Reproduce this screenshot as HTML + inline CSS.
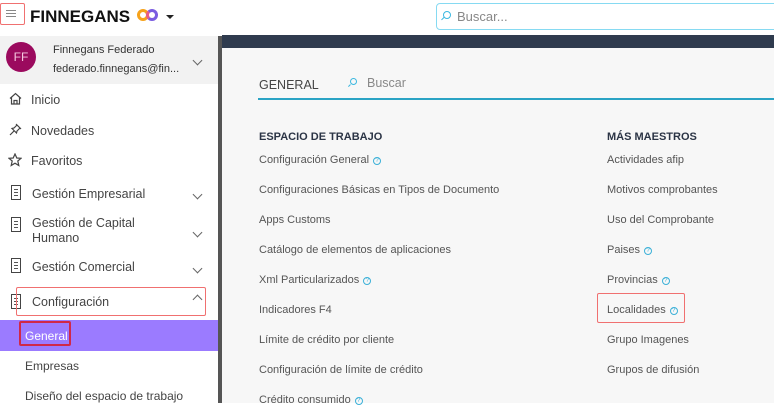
<!DOCTYPE html>
<html><head><meta charset="utf-8"><style>
*{margin:0;padding:0;box-sizing:border-box}
body{width:774px;height:403px;overflow:hidden;background:#fff;font-family:"Liberation Sans",sans-serif;position:relative;color:#333}
.a{position:absolute;white-space:nowrap}
.side{font-size:12.5px;color:#444}
.lk{font-size:11px;color:#555}
.q{display:inline-block;width:8px;height:8px;border:1px solid #3bb0d8;border-radius:50%;font-size:6px;line-height:6px;text-align:center;color:#3bb0d8;vertical-align:1px;margin-left:4px}
.red{position:absolute;border:1.5px solid #f07070;border-radius:2px}
.chev{position:absolute;width:7px;height:7px;border-right:1.3px solid #666;border-bottom:1.3px solid #666;transform:rotate(45deg)}
.bld{position:absolute;width:10px;height:15px;border:1.5px solid #444;background:repeating-linear-gradient(#555 0 1px,transparent 1px 3px);background-clip:content-box;padding:2px 2px}
</style></head><body>
<div class="red" style="left:0;top:3px;width:25px;height:22px"></div>
<div class="a" style="left:6px;top:10px;width:10px;height:1px;background:#888;box-shadow:0 3px 0 #888,0 6px 0 #888"></div>
<div class="a" style="left:30px;top:7px;font-size:17px;font-weight:bold;color:#111">FINNEGANS</div>
<div class="a" style="left:137px;top:9px;width:12px;height:12px;border:3px solid #f6a21b;border-radius:50%"></div>
<div class="a" style="left:146px;top:9px;width:12px;height:12px;border:3px solid #7a5ce0;border-radius:50%;border-left-color:#e85a8a"></div>
<div class="a" style="left:166px;top:15px;width:0;height:0;border-left:4px solid transparent;border-right:4px solid transparent;border-top:4px solid #222"></div>
<div class="a" style="left:436px;top:3px;width:345px;height:27px;border:1px solid #86daf2;border-radius:4px"></div>
<div class="a" style="left:443px;top:11px;width:8px;height:8px;border:1.3px solid #3bb8e0;border-radius:50%"></div>
<div class="a" style="left:441px;top:18px;width:4px;height:1.3px;background:#3bb8e0;transform:rotate(-45deg)"></div>
<div class="a" style="left:457px;top:9px;font-size:13px;color:#888">Buscar...</div>
<div class="a" style="left:0;top:36px;width:218px;height:48px;background:#f2f2f2"></div>
<div class="a" style="left:6px;top:42px;width:30px;height:30px;border-radius:50%;background:#9b0a5e;color:#f5c8e0;font-size:12px;line-height:30px;text-align:center">FF</div>
<div class="a" style="left:53px;top:44px;font-size:11px;color:#333">Finnegans Federado</div>
<div class="a" style="left:53px;top:63px;font-size:11px;color:#333">federado.finnegans@fin...</div>
<div class="chev" style="left:194px;top:57px"></div>
<div class="a" style="left:218px;top:36px;width:4px;height:367px;background:#555"></div>
<svg class="a" style="left:9px;top:92px" width="13" height="13" viewBox="0 0 13 13"><path d="M1 6.5L6.5 1.5L12 6.5M2.5 5.5V12H10.5V5.5M5 12V8.5H8V12" fill="none" stroke="#444" stroke-width="1.2"/></svg>
<div class="a side" style="left:31px;top:93px">Inicio</div>
<svg class="a" style="left:9px;top:123px" width="13" height="13" viewBox="0 0 13 13"><path d="M7 1L12 6M8 2L5 5L3 5.5L7.5 10L8 8L11 5M5 8L1 12" fill="none" stroke="#444" stroke-width="1.2"/></svg>
<div class="a side" style="left:31px;top:124px">Novedades</div>
<svg class="a" style="left:8px;top:153px" width="14" height="14" viewBox="0 0 14 14"><path d="M7 1L8.8 5L13 5.3L9.8 8L10.8 12.5L7 10.2L3.2 12.5L4.2 8L1 5.3L5.2 5Z" fill="none" stroke="#444" stroke-width="1.2"/></svg>
<div class="a side" style="left:31px;top:154px">Favoritos</div>
<div class="bld" style="left:11px;top:185px"></div>
<div class="a side" style="left:32px;top:187px">Gestión Empresarial</div>
<div class="chev" style="left:194px;top:191px"></div>
<div class="bld" style="left:11px;top:217px"></div>
<div class="a side" style="left:32px;top:216px;line-height:15px">Gestión de Capital<br>Humano</div>
<div class="chev" style="left:194px;top:229px"></div>
<div class="bld" style="left:11px;top:258px"></div>
<div class="a side" style="left:32px;top:260px">Gestión Comercial</div>
<div class="chev" style="left:194px;top:265px"></div>
<div class="bld" style="left:11px;top:294px"></div>
<div class="a side" style="left:32px;top:295px">Configuración</div>
<div class="chev" style="left:194px;top:296px;transform:rotate(225deg)"></div>
<div class="red" style="left:16px;top:287px;width:190px;height:29px"></div>
<div class="a" style="left:0;top:320px;width:218px;height:31px;background:#9b7bff"></div>
<div class="red" style="left:19px;top:321px;width:52px;height:25px;border:2px solid #d02848"></div>
<div class="a" style="left:25px;top:329px;font-size:12px;color:#fff">General</div>
<div class="a side" style="left:25px;top:359px;font-size:12px">Empresas</div>
<div class="a side" style="left:25px;top:389px;font-size:12px">Diseño del espacio de trabajo</div>
<div class="a" style="left:222px;top:35px;width:552px;height:368px;background:#f7f7f7"></div>
<div class="a" style="left:222px;top:35px;width:552px;height:13px;background:#2f3b4e"></div>
<div class="a" style="left:259px;top:78px;font-size:12.5px;color:#444">GENERAL</div>
<div class="a" style="left:350px;top:78px;width:7px;height:7px;border:1.2px solid #3bb8e0;border-radius:50%"></div>
<div class="a" style="left:348px;top:85px;width:3px;height:1.2px;background:#3bb8e0;transform:rotate(-45deg)"></div>
<div class="a" style="left:367px;top:76px;font-size:12.5px;color:#888">Buscar</div>
<div class="a" style="left:258px;top:98px;width:516px;height:1.5px;background:#2aa3c4"></div>
<div class="a" style="left:259px;top:131px;font-size:11px;font-weight:bold;color:#2b3445">ESPACIO DE TRABAJO</div>
<div class="a" style="left:607px;top:131px;font-size:11px;font-weight:bold;color:#2b3445">MÁS MAESTROS</div>
<div class="a lk" style="left:259px;top:154px">Configuración General<span class="q">?</span></div>
<div class="a lk" style="left:259px;top:184px">Configuraciones Básicas en Tipos de Documento</div>
<div class="a lk" style="left:259px;top:214px">Apps Customs</div>
<div class="a lk" style="left:259px;top:244px">Catálogo de elementos de aplicaciones</div>
<div class="a lk" style="left:259px;top:274px">Xml Particularizados<span class="q">?</span></div>
<div class="a lk" style="left:259px;top:304px">Indicadores F4</div>
<div class="a lk" style="left:259px;top:334px">Límite de crédito por cliente</div>
<div class="a lk" style="left:259px;top:364px">Configuración de límite de crédito</div>
<div class="a lk" style="left:259px;top:394px">Crédito consumido<span class="q">?</span></div>
<div class="a lk" style="left:607px;top:154px">Actividades afip</div>
<div class="a lk" style="left:607px;top:184px">Motivos comprobantes</div>
<div class="a lk" style="left:607px;top:214px">Uso del Comprobante</div>
<div class="a lk" style="left:607px;top:244px">Paises<span class="q">?</span></div>
<div class="a lk" style="left:607px;top:274px">Provincias<span class="q">?</span></div>
<div class="a lk" style="left:607px;top:304px">Localidades<span class="q">?</span></div>
<div class="red" style="left:597px;top:293px;width:88px;height:30px"></div>
<div class="a lk" style="left:607px;top:334px">Grupo Imagenes</div>
<div class="a lk" style="left:607px;top:364px">Grupos de difusión</div>
</body></html>
